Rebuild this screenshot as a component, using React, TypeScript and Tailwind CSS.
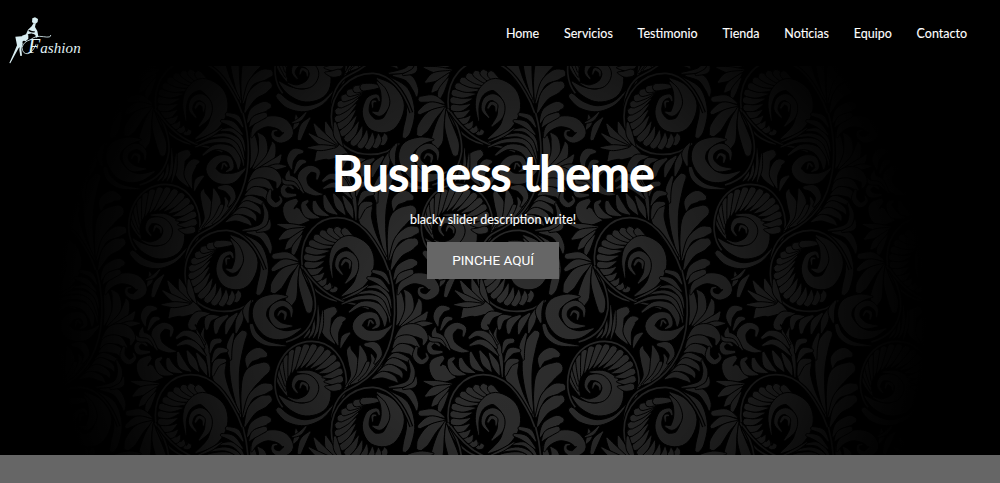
import React from "react";

type Pt = [number, number, number];

/** Builds a closed outline around a smooth centre line whose width varies from point to point. */
function ribbon(source: Pt[]): string {
  const pts = source.map(([x, y, w]) => [x, y, w * 1.1 + 2.5] as Pt);
  const n = pts.length;
  const left: string[] = [];
  const right: string[] = [];
  const at = (i: number) => pts[Math.max(0, Math.min(n - 1, i))];
  const steps = 6;
  const line: Pt[] = [];
  for (let i = 0; i < n - 1; i++) {
    const a = at(i - 1), b = at(i), c = at(i + 1), d = at(i + 2);
    for (let s = 0; s < steps; s++) {
      const t = s / steps;
      const q = [0, 1, 2].map(
        (k) =>
          0.5 *
          (2 * b[k] +
            (c[k] - a[k]) * t +
            (2 * a[k] - 5 * b[k] + 4 * c[k] - d[k]) * t * t +
            (3 * b[k] - a[k] - 3 * c[k] + d[k]) * t * t * t),
      );
      line.push([q[0], q[1], Math.max(1, q[2])]);
    }
  }
  line.push(pts[n - 1]);
  line.forEach((p, i) => {
    const a = line[Math.max(0, i - 1)];
    const b = line[Math.min(line.length - 1, i + 1)];
    const dx = b[0] - a[0], dy = b[1] - a[1];
    const len = Math.hypot(dx, dy) || 1;
    const nx = (-dy / len) * (p[2] / 2), ny = (dx / len) * (p[2] / 2);
    left.push(`${(p[0] + nx).toFixed(1)} ${(p[1] + ny).toFixed(1)}`);
    right.unshift(`${(p[0] - nx).toFixed(1)} ${(p[1] - ny).toFixed(1)}`);
  });
  const r1 = (pts[n - 1][2] / 2).toFixed(1);
  const r0 = (pts[0][2] / 2).toFixed(1);
  return `M${left.join("L")}A${r1} ${r1} 0 0 0 ${right[0]}L${right.join("L")}A${r0} ${r0} 0 0 0 ${left[0]}Z`;
}

const shift = (dx: number, dy: number, list: Pt[][]): Pt[][] =>
  list.map((l) => l.map(([x, y, w]) => [x + dx, y + dy, w] as Pt));

/** Feathers rooted on a ring, curling toward a second, inner centre. */
function feathers(
  ox: number, oy: number, ro: number,
  ix: number, iy: number, ri: number,
  from: number, to: number, n: number, swirl: number, width: number,
): Pt[][] {
  const out: Pt[][] = [];
  for (let k = 0; k < n; k++) {
    const a = ((from + ((to - from) * k) / (n - 1)) * Math.PI) / 180;
    const b = a + (swirl * Math.PI) / 180;
    const m = a + (swirl * 0.25 * Math.PI) / 180;
    const x0 = ox + Math.cos(a) * ro, y0 = oy + Math.sin(a) * ro;
    const x2 = ix + Math.cos(b) * ri, y2 = iy + Math.sin(b) * ri;
    const x1 = (ox + Math.cos(m) * ro + ix + Math.cos(m) * ri) / 2;
    const y1 = (oy + Math.sin(m) * ro + iy + Math.sin(m) * ri) / 2;
    out.push([[x0, y0, width], [x1, y1, width * 0.85], [x2, y2, 2]]);
  }
  return out;
}

const leaves: Pt[][] = [
  // fan of long leaves
  [[580, 440, 3], [566, 360, 17], [562, 290, 26], [572, 225, 30], [588, 192, 20]],
  [[600, 292, 3], [606, 266, 22], [632, 250, 30], [652, 254, 16]],
  [[586, 440, 3], [594, 370, 22], [616, 318, 46], [652, 294, 32]],
  [[588, 440, 3], [610, 382, 14], [645, 358, 28], [666, 352, 20]],
  [[592, 470, 3], [614, 420, 24], [645, 396, 32], [662, 388, 22]],
  [[600, 500, 3], [618, 468, 20], [650, 452, 26], [664, 450, 16]],
  [[576, 430, 3], [538, 372, 20], [514, 316, 34], [520, 282, 28]],
  [[558, 192, 6], [546, 230, 14], [550, 268, 3]],
  // hanging feathers below the upper ring
  [[366, 142, 5], [392, 118, 42], [428, 114, 38], [456, 124, 14]],
  [[486, 132, 4], [452, 136, 20], [434, 166, 22], [444, 176, 8]],
  [[512, 140, 5], [484, 146, 18], [478, 176, 8]],
  [[540, 138, 6], [512, 158, 20], [506, 188, 8]],
  [[568, 132, 6], [546, 158, 18], [536, 190, 5]],
  [[588, 118, 5], [576, 152, 18], [566, 188, 4]],
  [[610, 92, 3], [596, 122, 16], [602, 156, 5]],
  // spiky leaf
  [[432, 96, 3], [408, 62, 20], [396, 28, 4]],
  [[430, 98, 3], [386, 70, 20], [362, 34, 4]],
  [[428, 100, 3], [384, 88, 16], [346, 62, 3]],
  [[424, 102, 3], [382, 104, 14], [344, 104, 3]],
  [[446, 98, 3], [430, 66, 16], [424, 30, 6]],
  // sprig
  [[470, 174, 2], [464, 204, 11], [476, 232, 12], [484, 275, 9], [487, 320, 3]],
  [[448, 180, 2], [458, 206, 10], [472, 222, 4]],
  [[388, 204, 6], [412, 190, 14], [442, 200, 18], [470, 234, 4]],
  [[390, 226, 4], [420, 216, 14], [446, 228, 14], [474, 256, 3]],
  [[518, 212, 12], [498, 218, 14], [488, 248, 3]],
  [[538, 242, 8], [512, 244, 17], [494, 276, 3]],
  [[532, 272, 10], [508, 280, 18], [496, 316, 4]],
  // broad leaf with combed edge
  [[346, 322, 3], [306, 312, 46], [286, 284, 32], [306, 264, 14]],
  [[376, 314, 3], [344, 304, 20], [330, 276, 14], [342, 264, 6]],
  [[404, 308, 3], [372, 294, 20], [362, 268, 10]],
  [[430, 304, 3], [404, 284, 20], [392, 248, 6]],
  [[454, 304, 3], [436, 276, 20], [420, 244, 5]],
  [[478, 314, 3], [466, 284, 18], [448, 250, 4]],
  [[334, 342, 3], [292, 342, 16], [252, 334, 3]],
  [[330, 346, 3], [286, 362, 22], [258, 378, 5]],
  [[326, 354, 3], [294, 388, 20], [276, 408, 4]],
  [[324, 368, 3], [304, 404, 15], [296, 432, 3]],
  // small curl and companions
  [[370, 198, 5], [372, 176, 12], [348, 168, 18], [326, 190, 24], [334, 222, 20], [362, 240, 13], [386, 244, 2]],
  [[326, 116, 8], [304, 118, 20], [290, 140, 18], [294, 168, 3]],
  [[334, 146, 8], [318, 150, 14], [302, 180, 4]],
  [[298, 226, 5], [282, 216, 9], [268, 228, 12], [276, 246, 14], [306, 246, 6]],
  [[286, 172, 2], [284, 194, 17], [306, 206, 14], [330, 240, 2]],
  [[264, 196, 2], [274, 208, 10], [300, 212, 8], [316, 228, 2]],
  // three drooping petals
  [[312, 442, 3], [280, 428, 18], [242, 430, 14]],
  [[314, 450, 3], [272, 450, 20], [238, 470, 10]],
  [[314, 454, 3], [276, 478, 26], [250, 514, 30], [240, 532, 18]],
  [[316, 456, 3], [302, 498, 18], [292, 550, 30], [288, 572, 16]],
  [[320, 462, 3], [326, 510, 20], [342, 562, 26], [346, 592, 16]],
  // strip beside the left snail
  [[150, 366, 3], [196, 402, 14], [212, 464, 20], [202, 520, 20], [194, 540, 12]],
  [[160, 358, 4], [205, 366, 18], [226, 398, 14], [230, 420, 4]],
  [[746, 478, 3], [748, 500, 14], [738, 520, 3]],
  [[788, 486, 3], [768, 512, 16], [756, 548, 10]],
  [[736, 500, 3], [758, 490, 8], [776, 470, 3]],
];

const leftLeaves: Pt[][] = shift(0, 18, [
  // serrated leaf
  [[170, 146, 3], [182, 108, 20], [178, 60, 16], [172, 42, 4]],
  [[178, 148, 3], [206, 106, 22], [206, 64, 20], [194, 44, 4]],
  [[184, 150, 3], [226, 120, 22], [238, 84, 14], [236, 70, 3]],
  [[190, 152, 3], [240, 134, 22], [262, 108, 4]],
  [[200, 154, 3], [246, 144, 14], [276, 142, 3]],
  // lobe and hook
  [[166, 188, 4], [194, 164, 26], [230, 164, 32], [254, 184, 18], [250, 206, 4]],
  [[160, 214, 4], [178, 194, 20], [212, 192, 22], [236, 212, 6]],
  [[156, 228, 4], [182, 216, 22], [212, 224, 20], [222, 244, 4]],
  [[230, 214, 6], [226, 240, 13], [244, 258, 13], [262, 246, 8], [258, 232, 3]],
  [[144, 250, 3], [168, 238, 14], [204, 252, 10], [212, 262, 3]],
  [[130, 274, 3], [158, 256, 18], [190, 270, 14], [200, 284, 3]],
  [[114, 292, 3], [146, 276, 18], [178, 290, 14], [186, 304, 3]],
  [[98, 308, 3], [128, 296, 16], [158, 306, 14], [172, 318, 3]],
  [[208, 254, 4], [218, 288, 12], [204, 322, 12], [148, 334, 3]],
  [[228, 304, 3], [222, 326, 12], [190, 338, 3]],
  // curled leaf
  [[174, 54, 3], [186, 28, 16], [220, 8, 26], [262, 14, 32], [284, 42, 26], [262, 62, 17], [240, 54, 9], [238, 38, 6], [250, 34, 3]],
  [[168, 22, 3], [184, 2, 18], [214, -12, 14]],
  // plumes under the small snail
  [[18, 332, 3], [40, 300, 14], [40, 258, 26], [28, 226, 14], [30, 212, 3]],
  [[28, 326, 3], [56, 296, 14], [68, 250, 24], [60, 210, 4]],
  [[34, 324, 3], [68, 300, 16], [84, 262, 10]],
  [[58, 314, 3], [88, 292, 16], [100, 258, 12], [94, 236, 4]],
  [[76, 206, 8], [104, 210, 20], [118, 236, 14], [104, 262, 3]],
  [[88, 296, 3], [116, 270, 14], [130, 240, 3]],
  // sweeping strands
  [[28, 108, 4], [66, 84, 12], [110, 92, 18], [132, 122, 16], [134, 150, 4]],
  [[6, 84, 3], [56, 66, 9], [112, 68, 12], [142, 106, 8], [150, 140, 2]],
  [[40, 56, 3], [96, 48, 9], [136, 70, 10], [152, 120, 2]],
  [[78, 34, 3], [116, 34, 10], [144, 60, 8], [154, 96, 2]],
  [[84, 6, 6], [116, 16, 14], [146, 46, 3]],
  [[100, -14, 8], [130, -4, 12], [148, 24, 3]],
  [[6, 70, 2], [50, 50, 6], [84, 28, 2]],
  // small snail
  [[98, 158, 3], [114, 146, 10], [104, 120, 15], [72, 122, 20], [52, 150, 26], [74, 176, 28], [112, 178, 26], [140, 162, 10], [158, 146, 2]],
  [[84, 150, 3], [90, 134, 6], [100, 142, 4]],
]);

const rightLeaves: Pt[][] = shift(600, 18, [
  // leaf beside the ring
  [[262, 202, 3], [238, 166, 24], [236, 122, 30], [258, 104, 22]],
  [[272, 206, 3], [262, 166, 22], [276, 134, 22], [292, 128, 8]],
  [[280, 214, 3], [290, 186, 14], [306, 172, 5]],
  [[170, 186, 2], [184, 168, 7], [186, 146, 2]],
  [[184, 186, 2], [198, 162, 8], [200, 124, 2]],
  [[198, 186, 2], [212, 150, 9], [212, 88, 2]],
  [[212, 190, 2], [222, 150, 8], [226, 104, 2]],
  // upper snail
  [[118, 62, 3], [82, 66, 20], [44, 88, 36], [38, 126, 36], [68, 166, 34], [114, 176, 20], [160, 158, 3]],
  [[132, 122, 3], [130, 98, 10], [106, 82, 15], [78, 96, 15], [74, 124, 14], [96, 148, 16], [134, 150, 3]],
  [[92, 118, 3], [100, 106, 6], [114, 112, 8], [112, 130, 4]],
  [[12, 148, 10], [24, 178, 13], [58, 202, 11], [116, 210, 2]],
  // ringed snail
  [[150, 288, 3], [192, 294, 16], [226, 332, 36], [218, 380, 44], [174, 400, 34], [128, 386, 20], [96, 360, 3]],
  [[150, 350, 3], [138, 330, 8], [150, 306, 14], [182, 308, 20], [200, 334, 24], [186, 364, 20], [150, 374, 8], [122, 364, 2]],
  [[158, 336, 3], [164, 322, 7], [178, 328, 7], [180, 342, 3]],
  [[94, 402, 14], [124, 428, 18], [172, 440, 14], [222, 424, 8], [258, 388, 2]],
]);

const snails: Pt[][] = [
  // central snail
  ...shift(300, 18, [
    [[116, 476, 2], [112, 428, 9], [126, 388, 18], [164, 368, 32], [206, 396, 44], [216, 444, 42], [194, 496, 26], [146, 530, 3]],
    [[146, 466, 3], [130, 442, 9], [138, 414, 13], [162, 406, 17], [182, 428, 19], [180, 462, 15], [156, 492, 3]],
    [[168, 448, 3], [168, 430, 8], [154, 424, 8], [144, 438, 5]],
  ]),
  // left snail
  ...shift(0, 312, [
    [[112, 56, 3], [150, 86, 24], [170, 136, 40], [146, 190, 40], [102, 194, 30], [78, 160, 18], [86, 120, 12], [110, 108, 9], [118, 122, 4]],
    [[112, 66, 3], [130, 92, 14], [136, 130, 22], [120, 160, 14], [98, 156, 3]],
    [[98, 142, 3], [98, 126, 6], [108, 124, 4]],
  ]),
];

const combs: Pt[][] = [
  ...feathers(428, 440, 89, 458, 460, 70, 98, 286, 14, 22, 18),
  ...feathers(82, 482, 89, 118, 462, 72, 60, 262, 15, 18, 18),
  ...feathers(788, 322, 91, 774, 352, 60, 176, 378, 15, -20, 18),
];

const stems = [
  "M430 564C370 552 324 500 324 438C324 364 372 314 430 314C500 314 540 376 572 440C592 486 600 526 600 566",
  "M148 0C164 60 168 120 160 176C148 250 110 320 30 356C-10 374 -26 420 -26 470",
  "M178 562C150 590 110 598 72 594C14 588 -26 540 -26 482C-26 410 30 350 100 352C150 356 190 400 214 470",
  "M706 412C680 380 676 330 694 284C714 236 752 214 794 214C850 214 892 260 897 326C898 366 882 404 860 424",
  "M762 -12C792 30 806 76 804 116C796 170 770 200 716 216",
  "M770 -4C806 50 850 84 900 98C930 104 950 108 964 116",
];

const tile = {
  body: [...leaves, ...leftLeaves, ...rightLeaves].map(ribbon),
  combs: combs.map(ribbon),
  snails: snails.map(ribbon),
};

const offsets: [number, number][] = [];
for (let j = -3; j <= 2; j++)
  for (let i = -4; i <= 5; i++) if ((i + j) % 2 === 0) offsets.push([i * 439, j * 471]);

function Damask() {
  return (
    <svg className="block h-full w-full" viewBox="0 0 1000 389" preserveAspectRatio="none" aria-hidden="true">
      <defs>
        <g id="motif">
          <g fill="#2e2e2e" stroke="#000" strokeWidth="3">
            {tile.body.map((d, i) => <path key={i} d={d} />)}
            {tile.combs.map((d, i) => <path key={i} d={d} />)}
            {tile.snails.map((d, i) => <path key={i} d={d} />)}
          </g>
          <g fill="none">
            {stems.map((d, i) => (
              <React.Fragment key={i}>
                <path d={d} stroke="#000" strokeWidth="12" />
                <path d={d} stroke="#2a2a2a" strokeWidth="5" />
              </React.Fragment>
            ))}
          </g>
        </g>
        <radialGradient id="shade" gradientUnits="userSpaceOnUse" cx="0" cy="0" r="1" gradientTransform="translate(492 250) scale(435 410)">
          <stop offset="0" stopColor="#000" stopOpacity="0" />
          <stop offset="0.3" stopColor="#000" stopOpacity="0.08" />
          <stop offset="0.6" stopColor="#000" stopOpacity="0.42" />
          <stop offset="0.8" stopColor="#000" stopOpacity="0.76" />
          <stop offset="0.9" stopColor="#000" stopOpacity="0.9" />
          <stop offset="1" stopColor="#000" stopOpacity="1" />
        </radialGradient>
      </defs>
      <rect width="1000" height="389" fill="#000" />
      <g transform="translate(340 204) scale(0.33333)">
        {offsets.map(([x, y]) => <use key={`${x},${y}`} href="#motif" x={x} y={y} />)}
      </g>
      <rect width="1000" height="389" fill="url(#shade)" />
    </svg>
  );
}

function Logo() {
  return (
    <div className="relative h-[65px] w-[100px]">
      <svg className="block h-full w-full" viewBox="0 0 300 195" aria-hidden="true">
        <g fill="#d9eef2">
          <path d="M97 40l8-3 9 5-1 9-7 6-10-5z" />
          <path d="M101 54l6 2-2 10 7 12 3 16-6 4-5-8-10-4-9 5 0 10-8 8-8-3-3-14 12-4 6-14 11-10z" />
          <path d="M46 95l28-2 8 8-14 8-2 14-10 6-12 22-13 24-3-1 12-27 11-26z" />
          <path d="M60 118l8-4-4 18 2 20-5 1-3-18z" />
        </g>
        <path d="M86 76q10 6 18 4M84 90q12-6 22 2" stroke="#000" strokeWidth="4" fill="none" />
        <path d="M92 104Q106 91 130 95T152 90M92 104Q70 110 66 128Q68 148 84 146Q98 142 108 118" stroke="#d9eef2" strokeWidth="2.5" fill="none" />
      </svg>
      <span className="absolute top-[27px] left-[28px] flex items-baseline font-['Liberation_Serif',serif] leading-[28px] whitespace-nowrap text-[#e2f3f5] italic">
        <span className="text-[20px]">F</span>
        <span className="text-[15px] tracking-[0.1px]">ashion</span>
      </span>
    </div>
  );
}

const links = ["Home", "Servicios", "Testimonio", "Tienda", "Noticias", "Equipo", "Contacto"];

export default function App() {
  return (
    <div className="flex h-[483px] w-full flex-col overflow-hidden bg-[#666666] font-['Lato',sans-serif] text-white">
      <header className="flex h-[66px] shrink-0 items-start justify-between bg-black pr-[33px]">
        <div className="pt-[5px]">
          <Logo />
        </div>
        <nav className="flex gap-[24.8px] pt-[24px] text-[12.5px] leading-5 [-webkit-text-stroke:0.1px_white]">
          {links.map((l) => <a key={l} href="#">{l}</a>)}
        </nav>
      </header>
      <main className="grid h-[389px] shrink-0 bg-black">
        <div className="col-start-1 row-start-1 h-[389px]">
          <Damask />
        </div>
        <div className="z-10 col-start-1 row-start-1 flex flex-col items-center pt-[77px] pr-[14px]">
          <h1 className="text-[48px] leading-[60px] font-normal tracking-[-0.55px] whitespace-nowrap [-webkit-text-stroke:1.8px_white]">Business theme</h1>
          <p className="mt-[7px] text-[12.5px] leading-5 [-webkit-text-stroke:0.1px_white]">blacky slider description write!</p>
          <a href="#" className="mt-[12px] flex h-[37px] w-[132px] items-center justify-center bg-[#666666] pb-px font-['Roboto',sans-serif] text-[13.5px]">
            PINCHE AQUÍ
          </a>
        </div>
      </main>
    </div>
  );
}
